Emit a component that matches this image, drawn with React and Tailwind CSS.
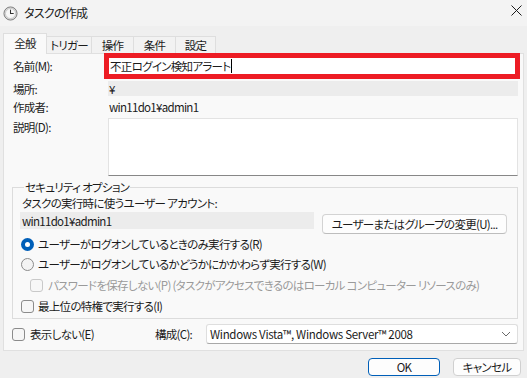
const jp = "font-['Noto_Sans_CJK_JP','Noto_Sans_CJK_SC',sans-serif] [font-feature-settings:'palt']";

function ClockIcon() {
  return (
    <svg width="15" height="15" viewBox="0 0 16 16" className="shrink-0">
      <circle cx="8" cy="8" r="7" fill="#d9d9d9" stroke="#7a7a7a" strokeWidth="1" />
      <circle cx="8" cy="8" r="5.3" fill="#f7f7f7" stroke="#b5b5b5" strokeWidth="0.6" />
      <path d="M8 8V4.2M8 8h3" stroke="#333" strokeWidth="1.1" strokeLinecap="round" fill="none" />
    </svg>
  )
}

function Check({ disabled }) {
  return (
    <span
      className={
        disabled
          ? 'inline-block h-[13px] w-[13px] shrink-0 rounded-[3px] border border-[#c9c9c9] bg-[#f7f7f7]'
          : 'inline-block h-[13px] w-[13px] shrink-0 rounded-[3px] border border-[#8b8b8b] bg-[#f6f6f6]'
      }
    />
  )
}

function Radio({ checked }) {
  if (checked) {
    return (
      <span className="flex h-[13px] w-[13px] shrink-0 items-center justify-center rounded-full bg-[#005fb8]">
        <span className="h-[5px] w-[5px] rounded-full bg-white" />
      </span>
    )
  }
  return <span className="inline-block h-[13px] w-[13px] shrink-0 rounded-full border border-[#8b8b8b] bg-[#f3f3f3]" />
}

function Tab({ label, w, active }) {
  if (active) {
    return (
      <div className={`relative z-10 -mb-px flex h-[21px] ${w} items-center justify-center border border-b-0 border-[#dedede] bg-[#f9f9f9] pb-[2px]`}>
        {label}
      </div>
    )
  }
  return (
    <div className={`flex h-[17px] ${w} items-center justify-center border border-l-0 border-b-0 border-[#dedede] bg-[#f2f2f2]`}>
      {label}
    </div>
  )
}

export default function App() {
  return (
    <div className={`h-[378px] w-[527px] overflow-hidden bg-[#efefef] text-[11.5px] leading-[16px] tracking-[-0.7px] text-[#1b1b1b] ${jp}`}>
      {/* title bar */}
      <div className="flex h-[26px] items-center bg-[#f3f3f3] pl-[3px] pr-[4px]">
        <ClockIcon />
        <span className="ml-[6px] text-[12px]">タスクの作成</span>
        <div className="flex-1" />
        <svg width="11" height="11" viewBox="0 0 11 11" className="mb-[6px] mr-[1px]">
          <path d="M0.5 0.5l10 10M10.5 0.5l-10 10" stroke="#1b1b1b" strokeWidth="1" />
        </svg>
      </div>

      {/* tabs */}
      <div className="mt-[7px] flex items-end px-[3px]">
        <Tab label="全般" w="w-[44px]" active />
        <Tab label="トリガー" w="w-[45px]" />
        <Tab label="操作" w="w-[42px]" />
        <Tab label="条件" w="w-[42px]" />
        <Tab label="設定" w="w-[40px]" />
      </div>

      {/* panel */}
      <div className="mx-[3px] flex h-[298px] flex-col border border-[#e0e0e0] bg-[#f9f9f9] pl-[9px] pr-[5px]">
        <div className="-mt-px flex h-[26px] items-center">
          <span className="w-[91px]">名前(M):</span>
          <div className="-mr-[2px] flex h-[26px] flex-1 items-center border-[5px] border-[#ed1c24] bg-white pl-[1px]">
            <span>不正ログイン検知アラート</span>
            <span className="ml-px h-[14px] w-px bg-black" />
          </div>
        </div>

        <div className="mt-[2px] flex h-[15px] items-center">
          <span className="w-[95px]">場所:</span>
          <div className="flex h-[15px] flex-1 items-center bg-[#ececec] pl-[1px]">¥</div>
        </div>

        <div className="mt-[2px] flex h-[18px] items-center">
          <span className="w-[95px]">作成者:</span>
          <span className="pl-[1px]">win11do1¥admin1</span>
        </div>

        <div className="mt-[2px] flex h-[58px] items-start">
          <span className="mt-px w-[95px]">説明(D):</span>
          <div className="h-[58px] flex-1 border border-b-[#878787] border-[#e3e3e3] bg-white" />
        </div>

        <fieldset className="-ml-px mt-[3px] border border-[#dcdcdc] pb-[4px] pl-[7px] pr-[10px]">
          <legend className="ml-[4px] px-[1px] leading-[16px]">セキュリティ オプション</legend>
          <div className="flex h-[16px] items-center pl-[2px]">タスクの実行時に使うユーザー アカウント:</div>
          <div className="mt-px flex h-[21px] items-start gap-[8px]">
            <div className="flex h-[17px] w-[294px] items-center bg-[#ececec] pl-[2px]">win11do1¥admin1</div>
            <div className="mt-[2px] flex h-[20px] flex-1 items-center justify-center whitespace-nowrap rounded-[4px] border border-[#d3d3d3] border-b-[#bdbdbd] bg-[#fdfdfd]">
              ユーザーまたはグループの変更(U)...
            </div>
          </div>
          <div className="mt-[3px] flex h-[16px] items-center gap-[4px] pl-px">
            <Radio checked />
            <span>ユーザーがログオンしているときのみ実行する(R)</span>
          </div>
          <div className="mt-[4px] flex h-[16px] items-center gap-[4px] pl-px">
            <Radio />
            <span>ユーザーがログオンしているかどうかにかかわらず実行する(W)</span>
          </div>
          <div className="mt-[5px] flex h-[16px] items-center gap-[5px] whitespace-nowrap pl-[10px] text-[#9a9a9a]">
            <Check disabled />
            <span>パスワードを保存しない(P) (タスクがアクセスできるのはローカル コンピューター リソースのみ)</span>
          </div>
          <div className="mt-[5px] flex h-[16px] items-center gap-[4px] pl-px">
            <Check />
            <span>最上位の特権で実行する(I)</span>
          </div>
        </fieldset>

        <div className="-ml-px mt-[5px] flex h-[20px] items-center">
          <Check />
          <span className="ml-[5px] w-[125px]">表示しない(E)</span>
          <span className="w-[51px]">構成(C):</span>
          <div className="flex h-[20px] flex-1 items-center rounded-[3px] border border-[#dedede] border-b-[#a8a8a8] bg-white pl-[3px] pr-[6px]">
            <span className="flex-1 tracking-[-0.3px]">Windows Vista™, Windows Server™ 2008</span>
            <svg width="10" height="6" viewBox="0 0 10 6">
              <path d="M1 1l4 4 4-4" stroke="#6a6a6a" strokeWidth="1" fill="none" />
            </svg>
          </div>
        </div>
      </div>

      {/* buttons */}
      <div className="mt-[7px] flex justify-end gap-[13px] pr-[6px]">
        <div className="flex h-[18px] w-[72px] items-center justify-center rounded-[4px] border-[1.5px] border-[#005fb8] bg-[#fdfdfd]">OK</div>
        <div className="flex h-[18px] w-[68px] items-center justify-center rounded-[4px] border border-[#d0d0d0] bg-[#fdfdfd]">キャンセル</div>
      </div>
    </div>
  )
}
